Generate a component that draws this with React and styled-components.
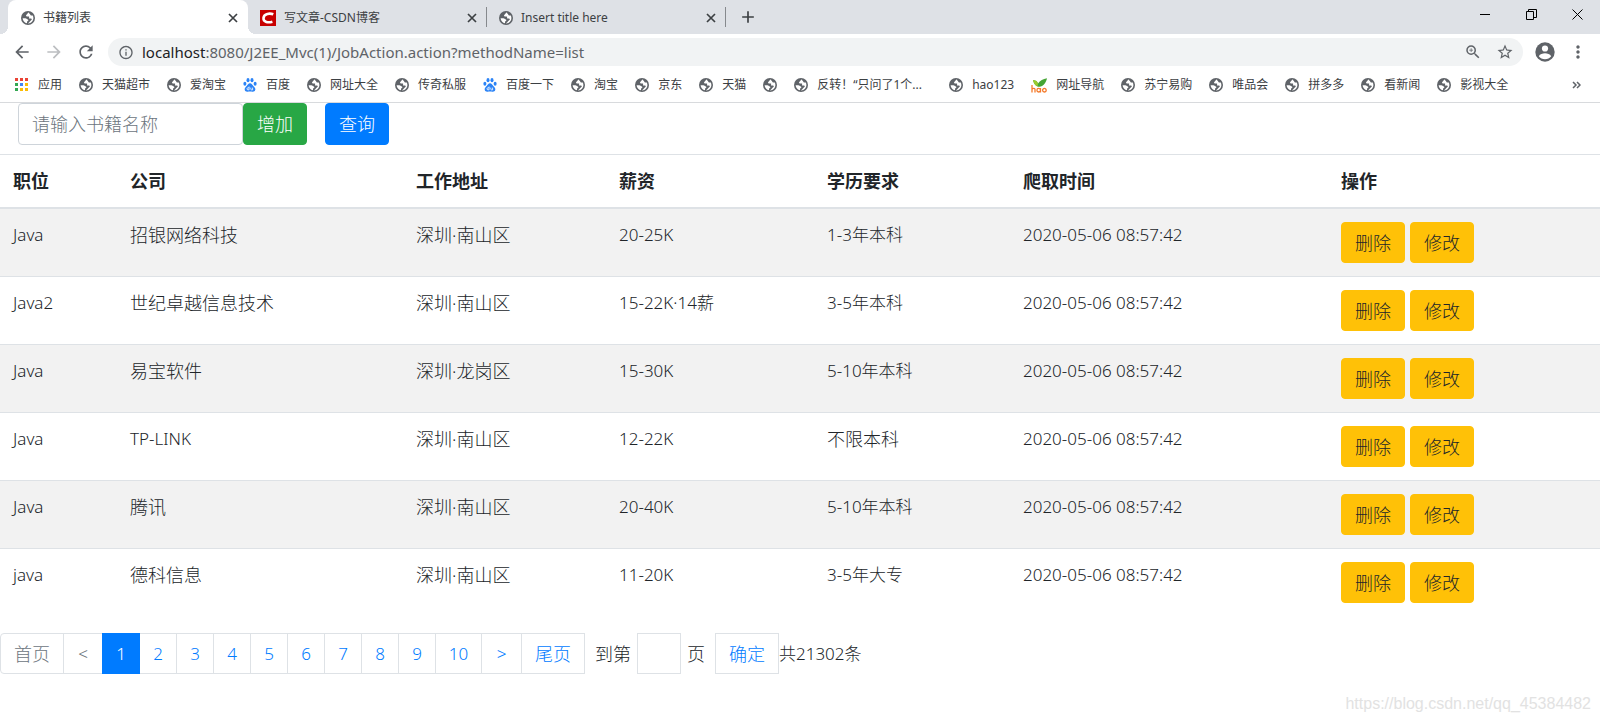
import React from "react";
import styled, { createGlobalStyle } from "styled-components";
import { MdArrowBack, MdArrowForward, MdRefresh, MdInfoOutline, MdZoomIn, MdStarBorder, MdMoreVert, MdAdd } from "react-icons/md";

const GlobalStyle = createGlobalStyle`
  *, *::before, *::after { box-sizing: border-box; }
  html, body, #root { min-height: 100vh; }
  body {
    margin: 0;
    background: #fff;
    color: #212529;
    font: 17px/26px "Noto Sans", "Noto Sans CJK SC", sans-serif;
  }
  button, input { font: inherit; }
  a { text-decoration: none; }
`;

const Page = styled.div`
  position: relative;
  min-height: 100vh;
`;

/* Browser frame */
const Chrome = styled.header`
  border-bottom: 1px solid #d8dadd;
  color: #3c4043;
  font-size: 12px;
  line-height: 16px;
`;

const TabStrip = styled.div`
  display: flex;
  height: 34px;
  padding-left: 8px;
  background: #dee1e6;
`;

const Tab = styled.div`
  position: relative;
  display: flex;
  align-items: center;
  gap: 8px;
  width: ${(p) => (p.$active ? 240 : 239)}px;
  padding: 1px 7px 0 ${(p) => (p.$active ? 13 : 12)}px;
  background: ${(p) => (p.$active ? "#fff" : "transparent")};
  border-radius: 8px 8px 0 0;

  &::before,
  &::after {
    content: "";
    display: ${(p) => (p.$active ? "block" : "none")};
    position: absolute;
    bottom: 0;
    width: 8px;
    height: 8px;
  }
  &::before {
    left: -8px;
    background: radial-gradient(circle at 0 0, transparent 8px, #fff 8px);
  }
  &::after {
    right: -8px;
    background: radial-gradient(circle at 100% 0, transparent 8px, #fff 8px);
  }
`;

const TabTitle = styled.span`
  flex: 1;
  white-space: nowrap;
`;

const TabDivider = styled.i`
  align-self: center;
  width: 1px;
  height: 20px;
  margin-left: -1px;
  background: #86898d;
`;

const IconButton = styled.button`
  display: flex;
  align-items: center;
  justify-content: center;
  flex: none;
  width: ${(p) => p.$w || 16}px;
  padding: 0;
  border: 0;
  background: none;
  color: ${(p) => p.$color || "#5f6368"};
`;

const WindowButtons = styled.div`
  display: flex;
  height: 28px;
  margin-left: auto;
`;

const Toolbar = styled.div`
  display: flex;
  align-items: center;
  height: 36px;
  padding: 0 6px;
`;

const AddressBar = styled.div`
  display: flex;
  align-items: center;
  flex: 1;
  height: 28px;
  margin: 0 5px 0 6px;
  padding: 0 2px 0 10px;
  border-radius: 14px;
  background: #f1f3f4;
`;

const Address = styled.div`
  flex: 1;
  margin-left: 8px;
  color: #5f6368;
  font-size: 15px;
  line-height: 20px;
  white-space: nowrap;
  outline: 0;

  b {
    color: #202124;
    font-weight: 400;
  }
`;

const Bookmarks = styled.nav`
  display: flex;
  align-items: center;
  gap: 17px;
  height: 32px;
  padding: 0 19px 2px 14px;
`;

const Bookmark = styled.a`
  display: flex;
  align-items: center;
  gap: 9px;
  color: #3c4043;
  white-space: nowrap;

  span {
    width: ${(p) => (p.$w ? p.$w + "px" : "auto")};
  }
`;

/* Page content */
const SearchForm = styled.form`
  display: flex;
  height: 51px;
  padding: 0 18px;
`;

const SearchInput = styled.input`
  width: 225px;
  height: 42px;
  padding: 0 13px;
  border: 1px solid #ced4da;
  border-radius: 4px;
  color: #495057;
  font-size: 18px;
  font-weight: 300;

  &::placeholder {
    color: #6c757d;
    opacity: 1;
  }
`;

const variants = {
  success: ["#28a745", "#fff"],
  primary: ["#007bff", "#fff"],
  warning: ["#ffc107", "#212529"],
};

const Button = styled.button`
  height: ${(p) => (p.$tall ? 42 : 41)}px;
  padding: 0 13px;
  border: 1px solid ${(p) => variants[p.$variant][0]};
  border-radius: 4px;
  background: ${(p) => variants[p.$variant][0]};
  color: ${(p) => variants[p.$variant][1]};
  font-size: 18px;
  font-weight: 300;
  white-space: nowrap;
`;

const SearchButton = styled(Button)`
  margin-left: 18px;
`;

const Table = styled.table`
  width: 100%;
  border-spacing: 0;
  text-align: left;
`;

const Col = styled.col`
  width: ${(p) => p.$w}px;
`;

const HeadCell = styled.th`
  padding: 13px;
  border-top: 1px solid #dee2e6;
  border-bottom: 2px solid #dee2e6;
  font-size: 18px;
  font-weight: 700;
`;

const Row = styled.tr`
  &:nth-child(odd) {
    background: #f2f2f2;
  }
  & + & > td {
    border-top: 1px solid #dee2e6;
  }
`;

const Cell = styled.td`
  padding: 13px;
  vertical-align: top;
  font-size: ${(p) => (p.$han ? 18 : 17)}px;
  font-weight: 300;
`;

const Actions = styled.div`
  display: flex;
  gap: 5px;
`;

const Pager = styled.nav`
  display: flex;
  align-items: center;
  margin-top: 17px;
  font-weight: 300;
`;

const PageLink = styled.a`
  display: flex;
  align-items: center;
  justify-content: center;
  width: ${(p) => p.$w || 38}px;
  height: 41px;
  margin-left: -1px;
  border: 1px solid ${(p) => (p.$active ? "#007bff" : "#dee2e6")};
  background: ${(p) => (p.$active ? "#007bff" : "#fff")};
  color: ${(p) => (p.$active ? "#fff" : p.$muted ? "#6c757d" : "#007bff")};
  font-size: ${(p) => (p.$han ? 18 : 17)}px;
  position: relative;
  z-index: ${(p) => (p.$active ? 1 : 0)};

  &:first-child {
    margin-left: 0;
    border-radius: 4px 0 0 4px;
  }
`;

const JumpLabel = styled.label`
  display: flex;
  align-items: center;
  gap: 6px;
  margin-left: 10px;
  font-size: 18px;
`;

const JumpInput = styled.input`
  width: 44px;
  height: 41px;
  border: 1px solid #dee2e6;
`;

const JumpButton = styled.button`
  width: 64px;
  height: 41px;
  margin-left: 10px;
  padding: 0;
  border: 1px solid #dee2e6;
  background: #fff;
  color: #007bff;
  font-size: 18px;
`;

const Watermark = styled.div`
  position: absolute;
  right: 9px;
  bottom: 8px;
  color: #e2e2e2;
  font: 16px/20px "Liberation Sans", sans-serif;
`;

/* Icons */
const Globe = () => (
  <svg width="14" height="14" viewBox="0 0 14 14" aria-hidden="true">
    <circle cx="7" cy="7" r="7" fill="#5f6368" />
    <path d="M7.400 1.600L5.300 4c-.6.700-.2 1.500.7 1.500h1.500c.8 0 .9.700.5 1.200-.2.400 0 .8.600.8h1.300c1 0 1.200 1 .5 1.600L9.300 10c-.6.700-1.200 1.700-2.400 2.400 3.200.1 5.500-2.400 5.500-5.400 0-.9-.2-1.700-.6-2.400H10.200c-1 0-.7-1.100-1.300-1.500-.9-.3-.3-1.100-1.500-1.500zM1.600 7.300c.2 2.600 2 4.600 4.400 5l.1-1.300c0-.6.500-.8 1-1.200.5-.5.3-1.200-.4-1.400-1-.200-1.300-1.100-2.300-1.100z" fill="#fff" />
  </svg>
);

const Baidu = () => (
  <svg width="14" height="14" viewBox="0 0 14 14" fill="#2b83f6" aria-hidden="true">
    <ellipse cx="5" cy="2.200" rx="1.500" ry="2.100" />
    <ellipse cx="9" cy="2.200" rx="1.500" ry="2.100" />
    <ellipse cx="1.900" cy="5.800" rx="1.500" ry="2" />
    <ellipse cx="12.100" cy="5.800" rx="1.500" ry="2" />
    <path d="M7 5.200c1.600 0 2.300 1.500 3.300 2.700 1 1.200 2.400 2.100 2 3.900-.3 1.700-1.800 2.100-3 1.900-1.500-.2-3.100-.2-4.600 0-1.200.2-2.700-.2-3-1.900-.4-1.800 1-2.700 2-3.900 1-1.200 1.700-2.700 3.300-2.700z" />
    <path d="M6.100 8.500v3.300H5a1 1 0 0 1 0-2h1.100M7.800 9.600v1.500c0 .5.300.8.800.8h1V9.600" fill="none" stroke="#fff" strokeWidth=".8" />
  </svg>
);

const Hao = () => (
  <svg width="16" height="15" viewBox="0 0 16 15" aria-hidden="true">
    <path d="M2 2c3 .3 4.500 1.500 5 3.500C9 2.500 12 .8 16 .2c-1 4.600-4 8.300-7.500 8.600C5 8.900 3 6 2 2z" fill="#45a535" />
    <path d="M2 2c3 .3 4.500 1.500 5 3.500l-.4 2.800C4 7.700 2.600 5 2 2z" fill="#9bcb2c" />
    <path d="M1 7v7.500M1 11.500c0-1.500 3-1.700 3 0v3M9.500 10v4.500M9.500 12.200a1.800 1.800 0 1 0-3.600 0 1.800 1.800 0 0 0 3.600 0M15.200 12.200a1.800 1.800 0 1 0-3.600 0 1.800 1.800 0 0 0 3.600 0" fill="none" stroke="#f47a2b" strokeWidth="1.300" />
  </svg>
);

const Csdn = () => (
  <svg width="16" height="16" viewBox="0 0 16 16" aria-hidden="true">
    <path fill="#c80000" d="M0 0h16v16H0z" />
    <path d="M13.300 4.300C10 3 4 3.300 3.500 8c-.4 4.400 5 4.900 8.900 3.700" fill="none" stroke="#fff" strokeWidth="2.600" />
  </svg>
);

const appColors = ["#ea4335", "#ea4335", "#ea4335", "#34a853", "#4285f4", "#fbbc05", "#34a853", "#fbbc05", "#fbbc05"];
const Apps = () => (
  <svg width="15" height="14" viewBox="0 0 15 14" aria-hidden="true">
    {appColors.map((c, i) => (
      <rect key={i} x={1 + (i % 3) * 5} y={Math.floor(i / 3) * 5} width="3" height="3" fill={c} />
    ))}
  </svg>
);

const Cross = () => (
  <svg width="14" height="14" viewBox="0 0 14 14" fill="none" stroke="#3c4043" strokeWidth="1.700" aria-hidden="true">
    <path d="M3 3l8 8M11 3l-8 8" />
  </svg>
);

const Avatar = () => (
  <svg width="20" height="20" viewBox="0 0 20 20" aria-hidden="true">
    <circle cx="10" cy="10" r="9.700" fill="#5f6368" />
    <circle cx="10" cy="6.500" r="3.100" fill="#fff" />
    <path d="M3.800 14.200c1.200-2 3.800-2.900 6.200-2.900s5 .9 6.200 2.900c-1.400 1.900-3.700 3-6.200 3s-4.800-1.100-6.200-3z" fill="#fff" />
  </svg>
);

const WindowIcon = ({ d }) => (
  <svg width="11" height="11" viewBox="0 0 11 11" fill="none" stroke="#000" aria-hidden="true">
    <path d={d} />
  </svg>
);

const bookmarks = [
  ["应用", Apps], ["天猫超市"], ["爱淘宝"], ["百度", Baidu], ["网址大全"], ["传奇私服"],
  ["百度一下", Baidu], ["淘宝"], ["京东"], ["天猫"], [""], ["反转！“只问了1个...", Globe, 115],
  ["hao123"], ["网址导航", Hao], ["苏宁易购"], ["唯品会"], ["拼多多"], ["看新闻"], ["影视大全"],
];

const columns = [
  ["职位", 117], ["公司", 286], ["工作地址", 203], ["薪资", 208],
  ["学历要求", 196], ["爬取时间", 318], ["操作", 272],
];

const time = "2020-05-06 08:57:42";
const jobs = [
  ["Java", "招银网络科技", "深圳·南山区", "20-25K", "1-3年本科", time],
  ["Java2", "世纪卓越信息技术", "深圳·南山区", "15-22K·14薪", "3-5年本科", time],
  ["Java", "易宝软件", "深圳·龙岗区", "15-30K", "5-10年本科", time],
  ["Java", "TP-LINK", "深圳·南山区", "12-22K", "不限本科", time],
  ["Java", "腾讯", "深圳·南山区", "20-40K", "5-10年本科", time],
  ["java", "德科信息", "深圳·南山区", "11-20K", "3-5年大专", time],
];

const isHan = (text) => /^[^\x00-\x7f]+$/.test(text);

function BrowserTab({ icon: Icon = Globe, title, active }) {
  return (
    <Tab $active={active}>
      <Icon />
      <TabTitle>{title}</TabTitle>
      <IconButton aria-label="关闭标签页"><Cross /></IconButton>
    </Tab>
  );
}

function BrowserFrame() {
  return (
    <Chrome>
      <TabStrip>
        <BrowserTab title="书籍列表" active />
        <BrowserTab title="写文章-CSDN博客" icon={Csdn} />
        <TabDivider />
        <BrowserTab title="Insert title here" />
        <TabDivider />
        <IconButton aria-label="新标签页" $w={44} $color="#3c4043"><MdAdd size={20} /></IconButton>
        <WindowButtons>
          <IconButton aria-label="最小化" $w={46}><WindowIcon d="M0 5.500h10" /></IconButton>
          <IconButton aria-label="还原" $w={46}><WindowIcon d="M.5 2.500h7v8h-7zM2.500 2.500v-2h8v8h-3" /></IconButton>
          <IconButton aria-label="关闭" $w={46}><WindowIcon d="M.5.5l10 10M10.500.5l-10 10" /></IconButton>
        </WindowButtons>
      </TabStrip>
      <Toolbar>
        <IconButton aria-label="后退" $w={32}><MdArrowBack size={20} /></IconButton>
        <IconButton aria-label="前进" $w={32} $color="#bcbec1"><MdArrowForward size={20} /></IconButton>
        <IconButton aria-label="重新加载" $w={32}><MdRefresh size={20} /></IconButton>
        <AddressBar>
          <IconButton aria-label="网站信息"><MdInfoOutline size={17} /></IconButton>
          <Address role="textbox" aria-label="地址" contentEditable suppressContentEditableWarning spellCheck={false}>
            <b>localhost</b>:8080/J2EE_Mvc(1)/JobAction.action?methodName=list
          </Address>
          <IconButton aria-label="缩放" $w={32}><MdZoomIn size={18} /></IconButton>
          <IconButton aria-label="收藏" $w={32}><MdStarBorder size={18} /></IconButton>
        </AddressBar>
        <IconButton aria-label="用户" $w={34}><Avatar /></IconButton>
        <IconButton aria-label="菜单" $w={32}><MdMoreVert size={20} /></IconButton>
      </Toolbar>
      <Bookmarks>
        {bookmarks.map(([name, Icon = Globe, width], i) => (
          <Bookmark key={i} href="#" $w={width} aria-label={name || "书签"}>
            <Icon />
            {name && <span>{name}</span>}
          </Bookmark>
        ))}
        <TabTitle />
        <IconButton aria-label="更多书签" $w={10}>
          <svg width="9" height="8" viewBox="0 0 9 8" fill="none" stroke="#5f6368" strokeWidth="1.500">
            <path d="M1 1l3 3-3 3M5 1l3 3-3 3" />
          </svg>
        </IconButton>
      </Bookmarks>
    </Chrome>
  );
}

export default function App() {
  return (
    <Page>
      <GlobalStyle />
      <BrowserFrame />
      <main>
        <SearchForm onSubmit={(e) => e.preventDefault()}>
          <SearchInput aria-label="书籍名称" placeholder="请输入书籍名称" />
          <Button type="button" $variant="success" $tall>增加</Button>
          <SearchButton type="submit" $variant="primary" $tall>查询</SearchButton>
        </SearchForm>
        <Table>
          <colgroup>
            {columns.map(([name, w]) => <Col key={name} $w={w} />)}
          </colgroup>
          <thead>
            <tr>{columns.map(([name]) => <HeadCell key={name} scope="col">{name}</HeadCell>)}</tr>
          </thead>
          <tbody>
            {jobs.map((job, r) => (
              <Row key={r}>
                {job.map((text, c) => <Cell key={c} $han={isHan(text)}>{text}</Cell>)}
                <Cell>
                  <Actions>
                    <Button type="button" $variant="warning">删除</Button>
                    <Button type="button" $variant="warning">修改</Button>
                  </Actions>
                </Cell>
              </Row>
            ))}
          </tbody>
        </Table>
        <Pager aria-label="分页">
          <PageLink href="#" $w={64} $muted $han>首页</PageLink>
          <PageLink href="#" $w={40} $muted>&lt;</PageLink>
          {[1, 2, 3, 4, 5, 6, 7, 8, 9].map((n) => (
            <PageLink key={n} href="#" $active={n === 1}>{n}</PageLink>
          ))}
          <PageLink href="#" $w={47}>10</PageLink>
          <PageLink href="#" $w={41}>&gt;</PageLink>
          <PageLink href="#" $w={64} $han>尾页</PageLink>
          <JumpLabel>
            到第
            <JumpInput />
            页
          </JumpLabel>
          <JumpButton type="button">确定</JumpButton>
          <span>共21302条</span>
        </Pager>
      </main>
      <Watermark>https://blog.csdn.net/qq_45384482</Watermark>
    </Page>
  );
}
